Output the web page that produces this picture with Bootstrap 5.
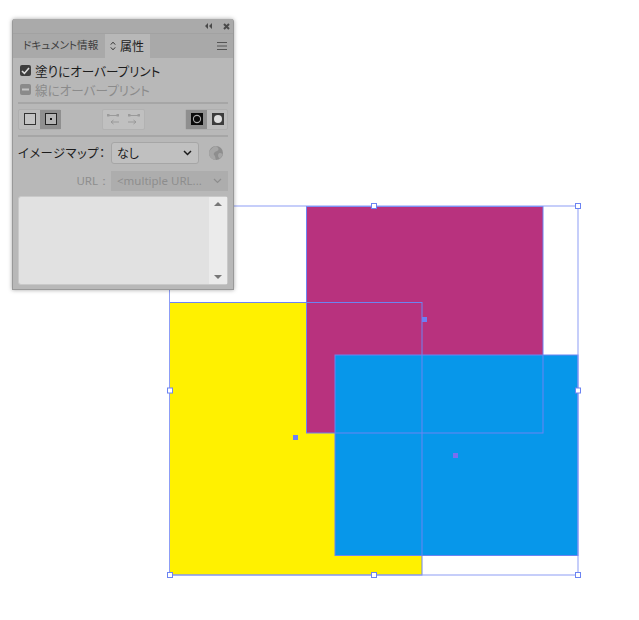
<!DOCTYPE html>
<html lang="ja">
<head>
<meta charset="utf-8">
<title>属性</title>
<link rel="stylesheet" href="https://cdn.jsdelivr.net/npm/bootstrap@5.3.0/dist/css/bootstrap.min.css">
<style>
html,body{margin:0;background:#fff;overflow:hidden}
body{font-family:"Noto Sans CJK JP","Noto Sans",sans-serif;font-size:12px;color:#1c1c1c;font-feature-settings:"palt"}
.stage{width:639px;height:620px;overflow:hidden}
.art{display:block}
.panel{left:12px;top:19px;width:222px;height:271px;background:#b8b8b8;border:1px solid #999;border-top:0;border-radius:3px 3px 0 0;box-shadow:0 0 4px rgba(0,0,0,.35)}
.titlebar{height:14px;background:#aaa;padding-right:3px;gap:11px}
.tabbar{height:25px;background:#a9a9a9;border-top:1px solid #a2a2a2;padding-left:1px;padding-right:6px}
.tabdoc{width:91px;color:#3e3e3e;font-size:10.6px;line-height:22px;padding-left:9px;white-space:nowrap}
.tabnow{width:45px;height:24px;background:#b8b8b8;color:#1c1c1c;font-size:12px;line-height:22px;padding-left:5px;gap:4px;white-space:nowrap}
.menuic{margin-left:auto}
.body-wrap{padding:3px 5px 0 5px}
.chk{height:19px;font-size:12.6px;gap:4px;padding-left:2px;white-space:nowrap;line-height:19px}
.box{width:11px;height:11px;border-radius:2px;background:#3e3e3e;flex:none}
.off{color:#8b8b8b}
.off .box{background:#8a8a8a}
.rule{height:2px;background:#a6a6a6;border:0;opacity:1;margin:0}
.rule-a{margin-top:3px}
.tools{height:31px;padding-bottom:1px}
.grp{height:21px;border:1px solid #afafaf;border-radius:2px;background:#bcbcbc;width:43px}
.ib{width:21px;height:19px;flex:none}
.ib.on{background:#8f8f8f}
.grp-fade{background:#c0c0c0;border-color:#b2b2b2}
.rowmap{height:32px;gap:2px}
.maplab{width:91px;font-size:12.3px;letter-spacing:.5px;white-space:nowrap;color:#1c1c1c}
.sel{height:22px;border:1px solid #a6a6a6;border-radius:3px;background:#c0c0c0;padding:0 6px 0 5px;font-size:12px;color:#1a1a1a}
.sel-map{width:88px}
.globe{margin-left:8px}
.rowurl{height:20px;margin-top:2px;gap:1px}
.urllab{width:92px;text-align:right;color:#8d8d8d;font-size:11.5px;font-family:"Noto Sans",sans-serif}
.sel-url{width:117px;height:20px;border:0;border-radius:0;background:#adadad;color:#8d8d8d;font-family:"Noto Sans",sans-serif;font-size:11.5px;padding:0 6px;white-space:nowrap}
.listarea{margin:5px 0 0 0;width:210px;height:89px;background:#e1e1e1;border-radius:3px;border:1px solid #c9c9c9}
.scroller{width:18px;background:#ebebeb;margin-left:auto;padding:5px 0}
</style>
</head>
<body>
<main class="stage position-relative">
  <svg class="art" width="639" height="620" viewBox="0 0 639 620" xmlns="http://www.w3.org/2000/svg">
    <rect x="170" y="303" width="252" height="272" fill="#fff100"/>
    <rect x="306.500" y="206" width="236.500" height="227" fill="#b8327e"/>
    <rect x="335" y="355" width="243" height="200.500" fill="#0797ea"/>
    <g fill="none" stroke="#6c84f2" stroke-width="1">
      <rect x="306.500" y="206.500" width="236.500" height="226.500"/>
      <rect x="169.500" y="302.500" width="252.500" height="272.500"/>
      <rect x="335" y="355" width="243" height="200.500"/>
      <rect x="169.500" y="206" width="408.500" height="369" stroke="#8d9df5"/>
    </g>
    <g fill="#fff" stroke="#6c84f2" stroke-width="1">
      <rect x="371.500" y="203.500" width="5" height="5"/>
      <rect x="575.500" y="203.500" width="5" height="5"/>
      <rect x="167.500" y="388" width="5" height="5"/>
      <rect x="575.500" y="388" width="5" height="5"/>
      <rect x="167.500" y="572.500" width="5" height="5"/>
      <rect x="371.500" y="572.500" width="5" height="5"/>
      <rect x="575.500" y="572.500" width="5" height="5"/>
    </g>
    <g fill="#6c7ff5">
      <rect x="422" y="317" width="5" height="5"/>
      <rect x="293" y="435" width="5" height="5"/>
      <rect x="453" y="453" width="5" height="5" fill="#7a6ef0"/>
    </g>
  </svg>

  <section class="panel position-absolute d-flex flex-column">
    <div class="titlebar d-flex align-items-center justify-content-end">
      <svg width="7" height="6" viewBox="0 0 7 6"><path d="M3 0v6L0 3zM7 0v6L4 3z" fill="#4a4a4a"/></svg>
      <svg width="7" height="7" viewBox="0 0 7 7"><path d="M1 1l5 5M6 1L1 6" stroke="#4a4a4a" stroke-width="2"/></svg>
    </div>
    <div class="tabbar d-flex align-items-start">
      <div class="tabdoc">ドキュメント情報</div>
      <div class="tabnow d-flex align-items-center">
        <svg width="6" height="10" viewBox="0 0 6 10"><path d="M.8 3.600 3 1.200l2.200 2.400M.8 6.400 3 8.800l2.200-2.400" fill="none" stroke="#333" stroke-width="1"/></svg>
        <span>属性</span>
      </div>
      <svg class="menuic mt-2" width="10" height="8" viewBox="0 0 10 8"><path d="M0 .5h10M0 4h10M0 7.500h10" stroke="#555" stroke-width="1"/></svg>
    </div>
    <div class="body-wrap d-flex flex-column">
      <div class="chk d-flex align-items-center">
        <span class="box d-flex align-items-center justify-content-center"><svg width="9" height="8" viewBox="0 0 9 8"><path d="M1 4l2.400 2.400L8 1" fill="none" stroke="#ddd" stroke-width="1.600"/></svg></span>
        <span>塗りにオーバープリント</span>
      </div>
      <div class="chk off d-flex align-items-center">
        <span class="box d-flex align-items-center justify-content-center"><svg width="7" height="3" viewBox="0 0 7 3"><rect width="7" height="2" y=".5" fill="#c4c4c4"/></svg></span>
        <span>線にオーバープリント</span>
      </div>
      <hr class="rule rule-a">
      <div class="tools d-flex align-items-center justify-content-between">
        <div class="grp d-flex">
          <div class="ib d-flex align-items-center justify-content-center"><svg width="12" height="12" viewBox="0 0 12 12"><rect x=".5" y=".5" width="11" height="11" fill="#c4c4c4" stroke="#333"/></svg></div>
          <div class="ib on d-flex align-items-center justify-content-center"><svg width="12" height="12" viewBox="0 0 12 12"><rect x=".5" y=".5" width="11" height="11" fill="#b4b4b4" stroke="#222"/><rect x="5" y="5" width="2" height="2" fill="#111"/></svg></div>
        </div>
        <div class="grp grp-fade d-flex">
          <div class="ib d-flex align-items-center justify-content-center"><svg width="14" height="12" viewBox="0 0 14 12"><path d="M3 2.500h8M5 9h8M5 9l2.500-2M5 9l2.500 2" fill="none" stroke="#9a9a9a"/><rect x="1" y="1" width="2.500" height="2.500" fill="#9a9a9a"/><rect x="10.500" y="1" width="2.500" height="2.500" fill="#9a9a9a"/></svg></div>
          <div class="ib d-flex align-items-center justify-content-center"><svg width="14" height="12" viewBox="0 0 14 12"><path d="M3 2.500h8M1 9h8M9 9 6.500 7M9 9l-2.500 2" fill="none" stroke="#9a9a9a"/><rect x="1" y="1" width="2.500" height="2.500" fill="#9a9a9a"/><rect x="10.500" y="1" width="2.500" height="2.500" fill="#9a9a9a"/></svg></div>
        </div>
        <div class="grp d-flex">
          <div class="ib on d-flex align-items-center justify-content-center"><svg width="12" height="12" viewBox="0 0 12 12"><rect width="12" height="12" fill="#0c0c0c"/><circle cx="6" cy="6" r="3.600" fill="none" stroke="#aaa" stroke-width="1.100"/></svg></div>
          <div class="ib d-flex align-items-center justify-content-center"><svg width="12" height="12" viewBox="0 0 12 12"><rect width="12" height="12" fill="#3c3c3c"/><circle cx="6" cy="6" r="4" fill="#dedede"/></svg></div>
        </div>
      </div>
      <hr class="rule">
      <div class="rowmap d-flex align-items-center">
        <span class="maplab">イメージマップ：</span>
        <div class="sel sel-map d-flex align-items-center justify-content-between">
          <span>なし</span>
          <svg width="9" height="6" viewBox="0 0 9 6"><path d="M1 1l3.500 3.500L8 1" fill="none" stroke="#1a1a1a" stroke-width="1.500"/></svg>
        </div>
        <svg class="globe" width="14" height="14" viewBox="0 0 14 14"><circle cx="7" cy="7" r="7" fill="#8e8e8e"/><path d="M7 0c1 1 3 2 2.500 3.500S7 5 6 6 4 8 5.500 9.500 6 13 7 14c-3.500 0-7-3-7-7 0-2 3-6 7-7zM10.500 7c1 0 2.500.5 3 1-.3 2-1.500 3.500-3 4.500-1-1-1.500-2-1.500-3s.5-2.500 1.500-2.500z" fill="#a6a6a6"/></svg>
      </div>
      <div class="rowurl d-flex align-items-center">
        <span class="urllab">URL：</span>
        <div class="sel sel-url d-flex align-items-center justify-content-between">
          <span>&lt;multiple URL...</span>
          <svg width="9" height="6" viewBox="0 0 9 6"><path d="M1 1l3.500 3.500L8 1" fill="none" stroke="#8d8d8d" stroke-width="1.200"/></svg>
        </div>
      </div>
      <div class="listarea d-flex">
        <div class="scroller d-flex flex-column justify-content-between align-items-center">
          <svg width="8" height="4" viewBox="0 0 8 4"><path d="M4 0l4 4H0z" fill="#777"/></svg>
          <svg width="8" height="4" viewBox="0 0 8 4"><path d="M0 0h8L4 4z" fill="#777"/></svg>
        </div>
      </div>
    </div>
  </section>
</main>
<script src="https://cdn.jsdelivr.net/npm/bootstrap@5.3.0/dist/js/bootstrap.bundle.min.js"></script>
</body>
</html>
